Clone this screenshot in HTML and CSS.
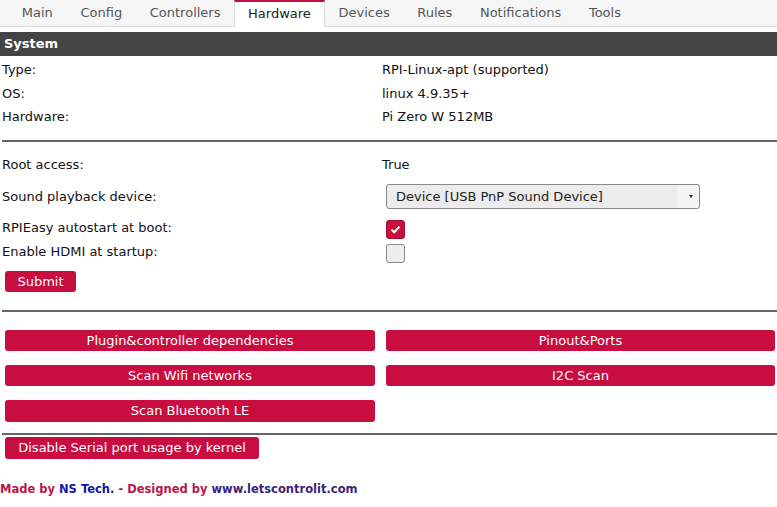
FILE: index.html
```html
<html>
<head>
  <title>RPIEasy - Hardware</title>
  <link rel="stylesheet" href="styles.css">
</head>
<body>
  <div class="tabs">
    <a class="tab">Main</a>
    <a class="tab">Config</a>
    <a class="tab">Controllers</a>
    <a class="tab active">Hardware</a>
    <a class="tab">Devices</a>
    <a class="tab">Rules</a>
    <a class="tab">Notifications</a>
    <a class="tab">Tools</a>
  </div>

  <div class="section-head">System</div>
  <div class="row"><span class="lbl">Type:</span><span>RPI-Linux-apt (supported)</span></div>
  <div class="row"><span class="lbl">OS:</span><span>linux 4.9.35+</span></div>
  <div class="row"><span class="lbl">Hardware:</span><span>Pi Zero W 512MB</span></div>

  <hr class="sep first">

  <div class="row root"><span class="lbl">Root access:</span><span>True</span></div>
  <div class="row sound">
    <span class="lbl">Sound playback device:</span>
    <div class="select-wrap">
      <select class="select">
        <option>Device [USB PnP Sound Device]</option>
      </select>
    </div>
  </div>
  <div class="row check-row auto">
    <span class="lbl">RPIEasy autostart at boot:</span>
    <span class="checkbox checked">
      <svg width="13" height="13" viewBox="0 0 13 13"><path d="M2.5 6.8 L5.2 9.3 L10.5 3.8" fill="none" stroke="#fff" stroke-width="2"/></svg>
    </span>
  </div>
  <div class="row check-row hdmi">
    <span class="lbl">Enable HDMI at startup:</span>
    <span class="checkbox"></span>
  </div>
  <button class="btn submit">Submit</button>

  <hr class="sep second">

  <div class="btn-grid">
    <button class="btn">Plugin&amp;controller dependencies</button>
    <button class="btn">Pinout&amp;Ports</button>
    <button class="btn">Scan Wifi networks</button>
    <button class="btn">I2C Scan</button>
    <button class="btn">Scan Bluetooth LE</button>
  </div>

  <hr class="sep third">

  <button class="btn serial">Disable Serial port usage by kernel</button>

  <div class="footer">
    <span class="red">Made by </span><span class="blue">NS Tech.</span><span class="red"> - Designed by </span><span class="purple">www.letscontrolit.com</span>
  </div>
</body>
</html>
```

FILE: styles.css
```css
body {
  margin: 0;
  font-family: "DejaVu Sans", sans-serif;
  font-size: 13px;
  color: #222;
  background: #fff;
}
.tabs {
  display: flex;
  height: 26px;
  padding-left: 8px;
  background: #f6f6f6;
  border-bottom: 1px solid #ddd;
}
.tab {
  padding: 0 12.8px;
  line-height: 25px;
  color: #555;
  border: 1px solid transparent;
  border-top: 0;
}
.active {
  background: #fff;
  color: #222;
  border-top: 2px solid #c8103f;
  border-left: 1px solid #ddd;
  border-right: 1px solid #ddd;
  line-height: 23px;
  margin-bottom: -1px;
}
.section-head {
  margin-top: 5px;
  height: 24px;
  line-height: 24px;
  padding-left: 4px;
  background: #444;
  color: #fff;
  font-weight: bold;
}
.row {
  display: flex;
  align-items: center;
  height: 23.5px;
  color: #111;
}
.section-head + .row {
  margin-top: 2px;
}
.lbl {
  width: 380px;
  padding-left: 2px;
  flex-shrink: 0;
}
.sep {
  border: 0;
  border-top: 2px solid #666;
  margin: 0 0 0 2px;
  height: 0;
}
.first {
  margin-top: 11px;
}
.root {
  margin-top: 11px;
  height: 24px;
}
.sound {
  margin-top: 7px;
  height: 25px;
}
.select-wrap {
  position: relative;
  margin-left: 4px;
}
.select-wrap::after {
  content: "";
  position: absolute;
  right: 7px;
  top: 11px;
  border-left: 2.5px solid transparent;
  border-right: 2.5px solid transparent;
  border-top: 3px solid #222;
  pointer-events: none;
}
.select {
  -webkit-appearance: none;
  appearance: none;
  width: 314px;
  height: 25px;
  padding: 0 0 0 9px;
  border: 1px solid #888;
  border-radius: 3px;
  background: linear-gradient(to right, #ececec 0, #ececec 290px, #f4f4f4 290px);
  font-family: "DejaVu Sans", sans-serif;
  font-size: 13px;
  color: #222;
}
.check-row {
  align-items: flex-start;
  height: 20px;
}
.check-row .lbl {
  line-height: 15px;
}
.auto {
  margin-top: 11px;
}
.hdmi {
  margin-top: 4px;
}
.checkbox {
  display: flex;
  align-items: center;
  justify-content: center;
  box-sizing: border-box;
  width: 19px;
  height: 19px;
  margin-left: 4px;
  border: 1px solid #888;
  border-radius: 3px;
  background: #eee;
}
.checked {
  background: #c8103f;
  border-color: #a80c35;
}
.btn {
  display: block;
  height: 21px;
  padding: 0;
  border: 0;
  border-radius: 3px;
  background: #c80d41;
  color: #fff;
  font-family: "DejaVu Sans", sans-serif;
  font-size: 13px;
  cursor: pointer;
}
.submit {
  width: 71px;
  margin: 7px 0 0 5px;
}
.second {
  margin-top: 18px;
}
.btn-grid {
  display: grid;
  grid-template-columns: 370px 389px;
  column-gap: 11px;
  row-gap: 14px;
  padding-left: 5px;
  margin-top: 18px;
}
.btn-grid .btn {
  width: 100%;
}
.btn-grid .btn:last-child {
  height: 22px;
}
.third {
  margin-top: 11px;
}
.serial {
  width: 254px;
  height: 22px;
  margin: 2px 0 0 5px;
}
.footer {
  margin-top: 23px;
  font-size: 11.5px;
  font-weight: bold;
}
.red {
  color: #b8154a;
}
.blue {
  color: #1515a8;
}
.purple {
  color: #3b1f7c;
}
```
